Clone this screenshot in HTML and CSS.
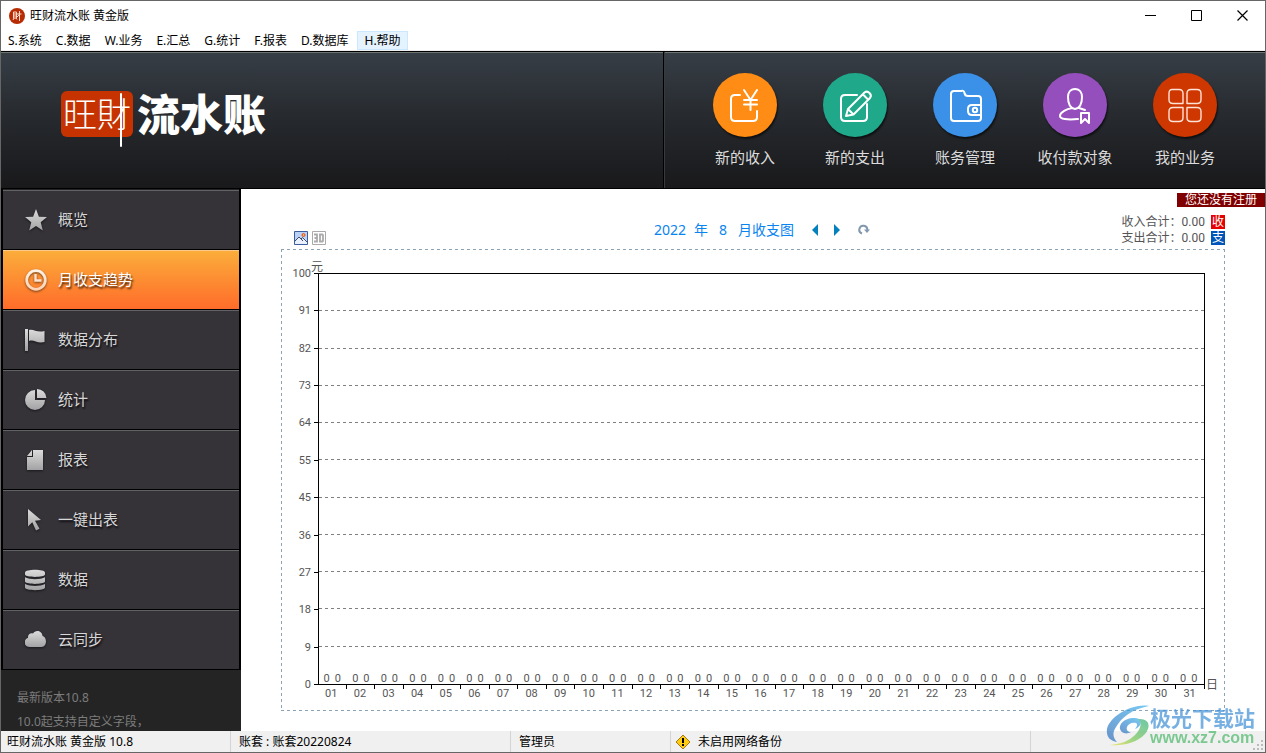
FILE: index.html
```html
<!DOCTYPE html>
<html lang="zh-CN">
<head>
<meta charset="utf-8">
<title>旺财流水账 黄金版</title>
<link rel="stylesheet" href="styles.css">
</head>
<body>
<svg class="defs" width="0" height="0" aria-hidden="true">
  <defs>
    <linearGradient id="silver" x1="0" y1="0" x2="0" y2="1"><stop offset="0" stop-color="#dcdcdc"/><stop offset="1" stop-color="#a2a2a4"/></linearGradient>
    <linearGradient id="cream" x1="0" y1="0" x2="0" y2="1"><stop offset="0" stop-color="#fff3e6"/><stop offset="1" stop-color="#ffd2b4"/></linearGradient>
  </defs>
</svg>
<div class="window">
  <header class="titlebar">
    <svg class="app-icon" width="16" height="16" viewBox="0 0 16 16"><circle cx="8" cy="8" r="8" fill="#b82c05"/><path d="M4.500 4h3v6h-3zM4.500 6h3M4.500 8h3M5 10l-1 2M7 10l1 1.500M8 6h4.500M10.500 3v10M10.500 6.500L8 9" fill="none" stroke="#ffd9cb"/></svg>
    <h1 class="app-title">旺财流水账 黄金版</h1>
    <div class="win-buttons">
      <button aria-label="最小化"><svg width="11" height="11"><path d="M0 5.500h11" stroke="#000"/></svg></button>
      <button aria-label="最大化"><svg width="11" height="11"><path d="M.5.5h10v10h-10z" fill="none" stroke="#000"/></svg></button>
      <button aria-label="关闭"><svg width="11" height="11"><path d="M.5.5l10 10M10.500.5l-10 10" stroke="#000" stroke-width="1.200"/></svg></button>
    </div>
  </header>
  <nav class="menubar">
    <button>S.系统</button><button>C.数据</button><button>W.业务</button><button>E.汇总</button><button>G.统计</button><button>F.报表</button><button>D.数据库</button><button class="hot">H.帮助</button>
  </nav>
  <div class="banner">
    <div class="brand"><span class="seal">旺財</span><span class="brand-name">流水账</span></div>
    <div class="tools">
      <button class="tool"><span class="disc orange"><svg width="64" height="64" viewBox="0 0 64 64"><path d="M27 22h-5q-4 0-4 4v18q0 4 4 4h18q4 0 4-4v-6"/><path d="M31 17l6.500 10L44 17M37.500 27v10M31 27h13M31 31.500h13"/></svg></span>新的收入</button>
      <button class="tool"><span class="disc green"><svg width="64" height="64" viewBox="0 0 64 64"><path d="M34 22H22q-4 0-4 4v18q0 4 4 4h18q4 0 4-4V31"/><path d="M23 43l2-7 16.500-16.500q2.500-2 5 .5t.5 5L30.500 41.500zM40 21.500l4.500 4.500M25 36l5.500 5.500"/></svg></span>新的支出</button>
      <button class="tool"><span class="disc blue"><svg width="64" height="64" viewBox="0 0 64 64"><path d="M48 31v-5q0-3-3-3H35q-3 0-3.500-3t-3.500-2h-7q-3 0-3 3v24q0 3 3 3h24q3 0 3-3V32h-9q-4 0-4 4v2q0 4 4 4h9"/><circle cx="42" cy="37" r="2.200"/></svg></span>账务管理</button>
      <button class="tool"><span class="disc purple"><svg width="64" height="64" viewBox="0 0 64 64"><path d="M32 16c-5 0-7 4-7 8 0 6 1 11 7 12 6-1 7-6 7-12 0-4-2-8-7-8zM29 35c-5 1-12 4-12 8 0 3 7 4 18 3M36 35l6 2M38 40h8v10l-4-4-4 4z"/></svg></span>收付款对象</button>
      <button class="tool"><span class="disc red"><svg width="64" height="64" viewBox="0 0 64 64"><path d="M19 16.500h7q4 0 4 4v10H20q-4 0-4-4v-6q0-4 3-4zM38 16.500h6q4 0 4 4v6q0 4-4 4H34v-10q0-4 4-4zM20 34.500h10v10q0 4-4 4h-6q-4 0-4-4v-6q0-4 4-4zM34 34.500h10q4 0 4 4v6q0 4-4 4h-6q-4 0-4-4z"/></svg></span>我的业务</button>
    </div>
  </div>
  <div class="body">
    <aside class="sidebar">
      <nav class="side-nav">
        <a href="#"><svg width="22" height="22"><path d="M11 0l2.900 7.700 8.100.4-6.300 5.200 2.100 8.200L11 17l-6.800 4.500 2.100-8.200L0 8.100l8.100-.4z" fill="url(#silver)"/></svg><span>概览</span></a>
        <a href="#" class="active" aria-current="page"><svg width="22" height="22"><circle cx="11" cy="11" r="9.300" fill="none" stroke="url(#cream)" stroke-width="2.800"/><path d="M10.500 5v6.500h6" fill="none" stroke="#ffe3cd" stroke-width="2.400"/></svg><span>月收支趋势</span></a>
        <a href="#"><svg width="22" height="22"><path d="M0 0h3v22H0zM4 1c5-1.500 7 3 15.500 1v11C12 15 9 10 4 12z" fill="url(#silver)"/></svg><span>数据分布</span></a>
        <a href="#"><svg width="22" height="22"><path d="M10 1v10h10a10 10 0 1 1-10-10zM12 0a9.500 9.500 0 0 1 9.500 9H12z" fill="url(#silver)"/></svg><span>统计</span></a>
        <a href="#"><svg width="22" height="22"><path d="M8 1h10v20H2V8h6zM7 1v6H2z" fill="url(#silver)"/></svg><span>报表</span></a>
        <a href="#"><svg width="22" height="22"><path d="M3 0l13 11-6 .7 4.500 8L11 21.500l-3.700-8.200L3 17.500z" fill="url(#silver)"/></svg><span>一键出表</span></a>
        <a href="#"><svg width="22" height="22"><path d="M0 3.500C0-.3 20-.3 20 3.500v2c0 3.200-20 3.200-20 0zM0 8.300c4 2.500 16 2.500 20 0v4.500c-2 2.800-18 2.800-20 0zM0 15c4 2.500 16 2.500 20 0v3.500c0 3.500-20 3.500-20 0z" fill="url(#silver)"/></svg><span>数据</span></a>
        <a href="#"><svg width="22" height="22"><path d="M5 18c-7 0-6.500-8-2-9-.5-4 3-5.500 5-4.500C10 .5 17 1 17.500 7c5 1.500 4.500 11-1 11z" fill="url(#silver)"/></svg><span>云同步</span></a>
      </nav>
      <div class="news"><p>最新版本10.8</p><p>10.0起支持自定义字段，</p></div>
    </aside>
    <main class="content">
      <a href="#" class="unregistered">您还没有注册</a>
      <div class="chart-head">
        <div class="modes">
          <button aria-label="图片"><svg width="14" height="14"><path d="M.5.5h13v13H.5z" fill="#b9d2f5" stroke="#3a5f9e"/><path d="M1 11l4-5 3 3 2-2 3 3v3H1z" fill="#eaf1fc"/><path d="M1 10l4-4 4 4M7 8l1.500-1.500 4.500 4.500" fill="none" stroke="#3f4d69"/><circle cx="9.500" cy="4" r="1.500" fill="#ffb066" stroke="#e0501a"/></svg></button>
          <button aria-label="3D"><svg width="14" height="14"><path d="M.5.5h13v13H.5z" fill="#fff" stroke="#aaa"/><path d="M2 3.500h3v7H2M2.500 7H5M8 3v8M7 3.500h3.500l.5.5v6l-.5.5H7" fill="none" stroke="#aaa" stroke-width="1.800"/></svg></button>
        </div>
        <div class="period">
          <span>2022</span><span>年</span><span class="month">8</span><span class="caption">月收支图</span>
          <button class="prev" aria-label="上月"><svg width="6" height="12"><path d="M6 0v12L0 6z" fill="#0481bd"/></svg></button>
          <button class="next" aria-label="下月"><svg width="6" height="12"><path d="M0 0v12l6-6z" fill="#0481bd"/></svg></button>
          <button aria-label="刷新"><svg width="12" height="12"><path d="M4 9.500A4 4 0 1 1 9.300 6" fill="none" stroke="#8298af" stroke-width="2"/><path d="M6 5.500h6L9 9z" fill="#8298af"/></svg></button>
        </div>
        <dl class="totals">
          <div><dt>收入合计：</dt><dd>0.00</dd><dd class="mark in">收</dd></div>
          <div><dt>支出合计：</dt><dd>0.00</dd><dd class="mark out">支</dd></div>
        </dl>
      </div>
      <section class="chart" aria-label="2022年8月收支图">
        <ol class="y-axis"><li>100</li><li>91</li><li>82</li><li>73</li><li>64</li><li>55</li><li>45</li><li>36</li><li>27</li><li>18</li><li>9</li><li>0</li></ol>
        <div class="plot">
          <div class="bands"><i></i><i></i><i></i><i></i><i></i><i></i><i></i><i></i><i></i><i></i><i></i></div>
          <ol class="values"><li>0<b>0</b></li><li>0<b>0</b></li><li>0<b>0</b></li><li>0<b>0</b></li><li>0<b>0</b></li><li>0<b>0</b></li><li>0<b>0</b></li><li>0<b>0</b></li><li>0<b>0</b></li><li>0<b>0</b></li><li>0<b>0</b></li><li>0<b>0</b></li><li>0<b>0</b></li><li>0<b>0</b></li><li>0<b>0</b></li><li>0<b>0</b></li><li>0<b>0</b></li><li>0<b>0</b></li><li>0<b>0</b></li><li>0<b>0</b></li><li>0<b>0</b></li><li>0<b>0</b></li><li>0<b>0</b></li><li>0<b>0</b></li><li>0<b>0</b></li><li>0<b>0</b></li><li>0<b>0</b></li><li>0<b>0</b></li><li>0<b>0</b></li><li>0<b>0</b></li><li>0<b>0</b></li></ol>
          <span class="unit-y">元</span>
        </div>
        <span class="unit-x">日</span>
        <ol class="x-axis"><li>01</li><li>02</li><li>03</li><li>04</li><li>05</li><li>06</li><li>07</li><li>08</li><li>09</li><li>10</li><li>11</li><li>12</li><li>13</li><li>14</li><li>15</li><li>16</li><li>17</li><li>18</li><li>19</li><li>20</li><li>21</li><li>22</li><li>23</li><li>24</li><li>25</li><li>26</li><li>27</li><li>28</li><li>29</li><li>30</li><li>31</li></ol>
      </section>
    </main>
  </div>
  <footer class="statusbar">
    <span>旺财流水账 黄金版 10.8</span>
    <span>账套 : 账套20220824</span>
    <span>管理员</span>
    <span class="backup"><svg width="16" height="16"><path d="M8 1l7 7-7 7-7-7z" fill="#fc1" stroke="#a47a1c"/><path d="M7 4h2v5H7zM7 10h2v2H7z" fill="#000"/></svg>未启用网络备份</span>
    <span class="grip"><svg width="10" height="10"><path d="M8 0h2v2H8zM4 4h2v2H4zM8 4h2v2H8zM0 8h2v2H0zM4 8h2v2H4zM8 8h2v2H8z" fill="#bbb"/></svg></span>
  </footer>
  <div class="watermark">
    <svg width="44" height="42" viewBox="0 0 44 42">
      <defs><linearGradient id="wm-blue" x1="1" y1="0" x2="0" y2="1"><stop offset="0" stop-color="#3fb4ee"/><stop offset="1" stop-color="#2f6cba"/></linearGradient><linearGradient id="wm-green" x1="1" y1="0" x2="0" y2="1"><stop offset="0" stop-color="#2fae80"/><stop offset=".6" stop-color="#7cc956"/><stop offset="1" stop-color="#f0e03c"/></linearGradient></defs>
      <path d="M43 1C27-2 4 11 1 24c-1 8 3 12 10 13-4-4-5-9-1-15C15 13 26 4 43 1z" fill="url(#wm-blue)"/>
      <path d="M26 13c-8 1-13 6-12 11 1 4 6 6 11 3-3 0-5-2-4-5s5-5 9-4c2 1 1 4-1 6 5-2 7-6 5-9-2-2-4-2-8-2z" fill="url(#wm-blue)"/>
      <path d="M32 14c12-1 13 8 7 15-8 9-22 12-35 11 11-1 19-4 25-10 5-5 8-12 3-16z" fill="url(#wm-green)"/>
    </svg>
    <div><strong>极光下载站</strong><em>www.xz7.com</em></div>
  </div>
</div>
</body>
</html>
```
FILE: styles.css
```css
* { box-sizing: border-box; }
body {
  margin: 0;
  font: 12px/16px "Noto Sans", "Noto Sans CJK SC", sans-serif;
  color: #000;
}
button {
  font: inherit;
  color: inherit;
  background: none;
  border: 0;
  padding: 0;
}
svg { display: block; flex: none; }
ol, dl, dd, p, h1 { margin: 0; padding: 0; list-style: none; }
a { color: inherit; text-decoration: none; }
.defs { position: absolute; }

.window {
  position: relative;
  display: flex;
  flex-direction: column;
  min-height: 100vh;
  border: 1px solid #666;
  background: #fff;
}
.titlebar { display: flex; align-items: center; height: 29px; padding-left: 8px; }
.app-title { flex: 1; margin-left: 5px; font-size: 12px; font-weight: 400; }
.win-buttons { display: flex; }
.win-buttons button { display: grid; place-items: center; width: 46px; height: 29px; }

.menubar { display: flex; height: 21px; padding-top: 1px; border-bottom: 1px solid #eee; }
.menubar button { height: 19px; padding: 0 6px; border: 1px solid transparent; line-height: 17px; }
.menubar .hot { margin-left: 2px; background: #e5f3ff; border-color: #cce8ff; }

.banner {
  display: flex;
  height: 138px;
  border-top: 1px solid #000;
  border-bottom: 1px solid #000;
  background: linear-gradient(#373e46, #24272b 55%, #19191b);
  box-shadow: inset 0 1px #6d7472;
}
.brand { flex: 1; display: flex; align-items: center; padding: 0 0 12px 60px; color: #fff; }
.seal {
  position: relative;
  width: 72px;
  height: 46px;
  border-radius: 6px;
  background: #c63300;
  font: 300 34px/44px "Noto Sans CJK TC", sans-serif;
  text-align: center;
}
.seal::after {
  content: "";
  position: absolute;
  left: 59px;
  top: 2px;
  width: 2px;
  height: 54px;
  border-radius: 1px;
  background: #fff;
}
.brand-name { margin-left: 4px; padding-bottom: 4px; font: 900 43px/46px "Noto Sans CJK SC", sans-serif; }
.tools {
  display: flex;
  padding: 21px 25px 0 26px;
  border-left: 1px solid #000;
  box-shadow: inset 1px 0 #383b3e;
}
.tool { display: flex; flex-direction: column; align-items: center; gap: 9px; width: 110px; height: 95px; font-size: 15px; line-height: 22px; color: #dcdcdc; }
.disc { border-radius: 50%; box-shadow: 1px 2px 2px #0009; }
.disc svg { fill: none; stroke: #fff; stroke-width: 2; stroke-linejoin: round; stroke-linecap: round; }
.orange { background: #ff8c14; }
.green { background: #20a88b; }
.blue { background: #3b90e8; }
.purple { background: #954fbd; }
.red { background: #cf3700; }
.red svg { stroke: #ffe2d6; stroke-width: 1.4; }

.body { flex: 1; display: flex; }
.sidebar { width: 240px; background: #242424; display: flex; flex-direction: column; }
.side-nav { padding-top: 1px; border: solid #000; border-width: 0 2px; }
.side-nav a {
  display: flex;
  align-items: center;
  gap: 11px;
  height: 60px;
  padding-left: 22px;
  border-top: 1px solid #626166;
  border-bottom: 1px solid #000;
  background: #353238;
  font-size: 15px;
  color: #d6d6d6;
  text-shadow: 1px 2px 2px #000c;
}
.side-nav span { padding-bottom: 2px; }
.side-nav svg { filter: drop-shadow(0 1px 1px #0008); }
.side-nav .active { background: linear-gradient(#fbad3b, #ff6c2a); border-top-color: #fdc98b; color: #fff; }
.news { padding: 16px 16px 0; line-height: 24px; color: #7c7c7c; white-space: nowrap; }
.news p:last-child { height: 21px; }

.content { position: relative; flex: 1; min-width: 0; display: flex; flex-direction: column; padding: 0 40px 20px; }
.unregistered { position: absolute; top: 4px; right: 0; padding: 0 8px; background: #800000; color: #fff; line-height: 14px; }
.chart-head { display: grid; grid-template-columns: 1fr auto 1fr; align-items: end; height: 60px; padding-bottom: 3px; }
.modes { display: flex; gap: 4px; padding: 0 0 1px 13px; }
.period { display: flex; align-items: center; gap: 8px; padding: 0 0 6px 18px; font-size: 14px; line-height: 20px; color: #0a84f0; }
.month { margin: 0 3px; }
.caption { margin-right: 10px; }
.next { margin: 0 10px 0 8px; }
.totals { justify-self: end; line-height: 16px; color: #555; font-family: Roboto, "Noto Sans CJK SC", sans-serif; }
.totals div { display: flex; align-items: center; height: 16px; }
.mark { width: 14px; height: 14px; margin-left: 6px; color: #fff; line-height: 14px; text-align: center; }
.in { background: #e60000; }
.out { background: #0055b8; }

.chart {
  --dash: #8ba3b5 0 3px, transparent 3px 6px;
  flex: 1;
  display: grid;
  grid-template: 1fr 26px / 37px 1fr 20px;
  padding-top: 24px;
  font: 11px/13px Roboto, "Noto Sans CJK SC", sans-serif;
  color: #555;
  background:
    repeating-linear-gradient(90deg, var(--dash)) top / 100% 1px no-repeat,
    repeating-linear-gradient(90deg, var(--dash)) bottom / 100% 1px no-repeat,
    repeating-linear-gradient(var(--dash)) left / 1px 100% no-repeat,
    repeating-linear-gradient(var(--dash)) right / 1px 100% no-repeat;
}
.y-axis { display: flex; flex-direction: column; justify-content: space-between; margin: -6px 0; }
.y-axis li { display: flex; justify-content: flex-end; align-items: center; gap: 3px; height: 13px; }
.y-axis li::after { content: ""; width: 4px; height: 1px; background: #000; }
.plot { position: relative; display: grid; border: 1px solid #000; }
.bands { grid-area: 1 / 1; display: grid; grid-auto-rows: 1fr; }
.bands i { background: repeating-linear-gradient(90deg, #808080 0 3px, transparent 3px 6px) bottom / 100% 1px no-repeat; }
.bands i:last-child { background: none; }
.values { grid-area: 1 / 1; align-self: end; display: flex; line-height: 11px; }
.values li, .x-axis li { flex: 1; padding-right: 2px; text-align: center; }
.values b { margin-left: 5px; font-weight: 400; }
.unit-y { position: absolute; left: -8px; top: -13px; font-size: 12px; }
.unit-x { align-self: end; height: 6px; padding-left: 1px; font-size: 12px; }
.x-axis { grid-column: 2; display: flex; }
.x-axis li { padding-top: 2px; background: linear-gradient(#000, #000) right top / 1px 4px no-repeat; }

.statusbar { display: grid; grid-template-columns: 230px 280px 160px 360px 1fr; height: 21px; background: #f0f0f0; line-height: 21px; }
.statusbar span { padding-left: 8px; border-right: 1px solid #d4d4d4; white-space: nowrap; }
.statusbar span:first-child { padding-left: 6px; }
.statusbar .backup { display: flex; align-items: center; gap: 7px; padding-left: 4px; }
.statusbar .grip { display: flex; justify-content: flex-end; align-items: flex-end; padding: 2px; border: 0; }

.watermark { position: absolute; right: 10px; bottom: 5px; display: flex; align-items: center; opacity: .7; pointer-events: none; }
.watermark div { display: flex; flex-direction: column; }
.watermark strong { font: 700 21px/24px "Noto Sans CJK SC", sans-serif; color: #3f8fd6; }
.watermark em { font: 700 16px/18px "Liberation Sans", sans-serif; color: #4bb86a; }
```
